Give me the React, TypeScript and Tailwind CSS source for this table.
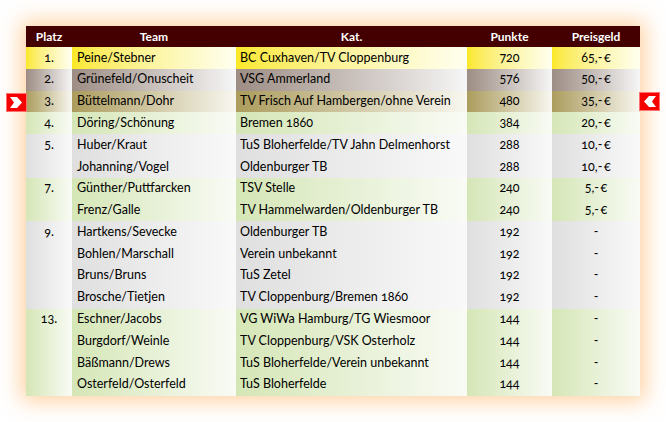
import React from "react";

type Tone = "gold" | "silver" | "bronze" | "green" | "gray";

const grad: Record<Tone, string> = {
  gold: "bg-gradient-to-r from-[#fbe824] to-[#fffff0]",
  silver: "bg-gradient-to-r from-[#9d8d84] to-[#f6f6f6]",
  bronze: "bg-gradient-to-r from-[#ac9c5c] to-[#f8f7f0]",
  green: "bg-gradient-to-r from-[#d5e6b6] to-[#f9fbf5]",
  gray: "bg-gradient-to-r from-[#dfdfdf] to-[#f9f9f9]",
};

type Row = { team: string; kat: string; pts: string; prize: string };
type Group = { place: string; tone: Tone; rows: Row[] };

const E = "\u2009€";

const groups: Group[] = [
  { place: "1.", tone: "gold", rows: [{ team: "Peine/Stebner", kat: "BC Cuxhaven/TV Cloppenburg", pts: "720", prize: "65,-" + E }] },
  { place: "2.", tone: "silver", rows: [{ team: "Grünefeld/Onuscheit", kat: "VSG Ammerland", pts: "576", prize: "50,-" + E }] },
  { place: "3.", tone: "bronze", rows: [{ team: "Büttelmann/Dohr", kat: "TV Frisch Auf Hambergen/ohne Verein", pts: "480", prize: "35,-" + E }] },
  { place: "4.", tone: "green", rows: [{ team: "Döring/Schönung", kat: "Bremen 1860", pts: "384", prize: "20,-" + E }] },
  {
    place: "5.",
    tone: "gray",
    rows: [
      { team: "Huber/Kraut", kat: "TuS Bloherfelde/TV Jahn Delmenhorst", pts: "288", prize: "10,-" + E },
      { team: "Johanning/Vogel", kat: "Oldenburger TB", pts: "288", prize: "10,-" + E },
    ],
  },
  {
    place: "7.",
    tone: "green",
    rows: [
      { team: "Günther/Puttfarcken", kat: "TSV Stelle", pts: "240", prize: "5,-" + E },
      { team: "Frenz/Galle", kat: "TV Hammelwarden/Oldenburger TB", pts: "240", prize: "5,-" + E },
    ],
  },
  {
    place: "9.",
    tone: "gray",
    rows: [
      { team: "Hartkens/Sevecke", kat: "Oldenburger TB", pts: "192", prize: "-" },
      { team: "Bohlen/Marschall", kat: "Verein unbekannt", pts: "192", prize: "-" },
      { team: "Bruns/Bruns", kat: "TuS Zetel", pts: "192", prize: "-" },
      { team: "Brosche/Tietjen", kat: "TV Cloppenburg/Bremen 1860", pts: "192", prize: "-" },
    ],
  },
  {
    place: "13.",
    tone: "green",
    rows: [
      { team: "Eschner/Jacobs", kat: "VG WiWa Hamburg/TG Wiesmoor", pts: "144", prize: "-" },
      { team: "Burgdorf/Weinle", kat: "TV Cloppenburg/VSK Osterholz", pts: "144", prize: "-" },
      { team: "Bäßmann/Drews", kat: "TuS Bloherfelde/Verein unbekannt", pts: "144", prize: "-" },
      { team: "Osterfeld/Osterfeld", kat: "TuS Bloherfelde", pts: "144", prize: "-" },
    ],
  },
];

const span: Record<number, string> = { 1: "row-span-1", 2: "row-span-2", 4: "row-span-4" };

function Marker({ dir }: { dir: "right" | "left" }) {
  return (
    <div className="w-[21px] h-[19px] bg-[#f60000] border border-[#ff7070] flex items-center justify-center">
      <svg width="15" height="13" viewBox="0 0 15 13">
        {dir === "right" ? (
          <polygon points="1,1 8,1 13,6.5 8,12 1,12 5,6.5" fill="#fff" />
        ) : (
          <polygon points="14,1 7,1 2,6.5 7,12 14,12 10,6.5" fill="#fff" />
        )}
      </svg>
    </div>
  );
}

export default function App() {
  return (
    <div
      className="relative w-[666px] h-[422px] bg-white pt-[26px] pl-[26px] text-[12.5px] text-black"
      style={{ fontFamily: "Lato, 'Open Sans', sans-serif" }}
    >
      <div className="w-[614px] shadow-[0_0_20px_5px_rgba(255,165,70,0.5)]">
        <div className="grid grid-cols-[46px_164px_231px_85px_88px] h-[21px] bg-[#440000] text-white font-bold text-[12px] items-center text-center">
          <div>Platz</div>
          <div>Team</div>
          <div>Kat.</div>
          <div>Punkte</div>
          <div>Preisgeld</div>
        </div>
        <div className="grid grid-cols-[46px_164px_231px_85px_88px] auto-rows-[21.8px] oldstyle-nums">
          {groups.map((g) => (
            <React.Fragment key={g.place}>
              <div className={`col-start-1 ${span[g.rows.length]} ${grad[g.tone]}`}>
                <div className="h-[21.8px] flex items-center justify-center">{g.place}</div>
              </div>
              {g.rows.map((r) => (
                <React.Fragment key={r.team}>
                  <div className={`col-start-2 flex items-center pl-[5px] whitespace-nowrap ${grad[g.tone]}`}>{r.team}</div>
                  <div className={`col-start-3 flex items-center pl-[4px] whitespace-nowrap ${grad[g.tone]}`}>{r.kat}</div>
                  <div className={`col-start-4 flex items-center justify-center ${grad[g.tone]}`}>{r.pts}</div>
                  <div className={`col-start-5 flex items-center justify-center ${grad[g.tone]}`}>{r.prize}</div>
                </React.Fragment>
              ))}
            </React.Fragment>
          ))}
        </div>
      </div>
      <div className="absolute left-[6px] top-[93px]">
        <Marker dir="right" />
      </div>
      <div className="absolute left-[639px] top-[92px]">
        <Marker dir="left" />
      </div>
    </div>
  );
}
